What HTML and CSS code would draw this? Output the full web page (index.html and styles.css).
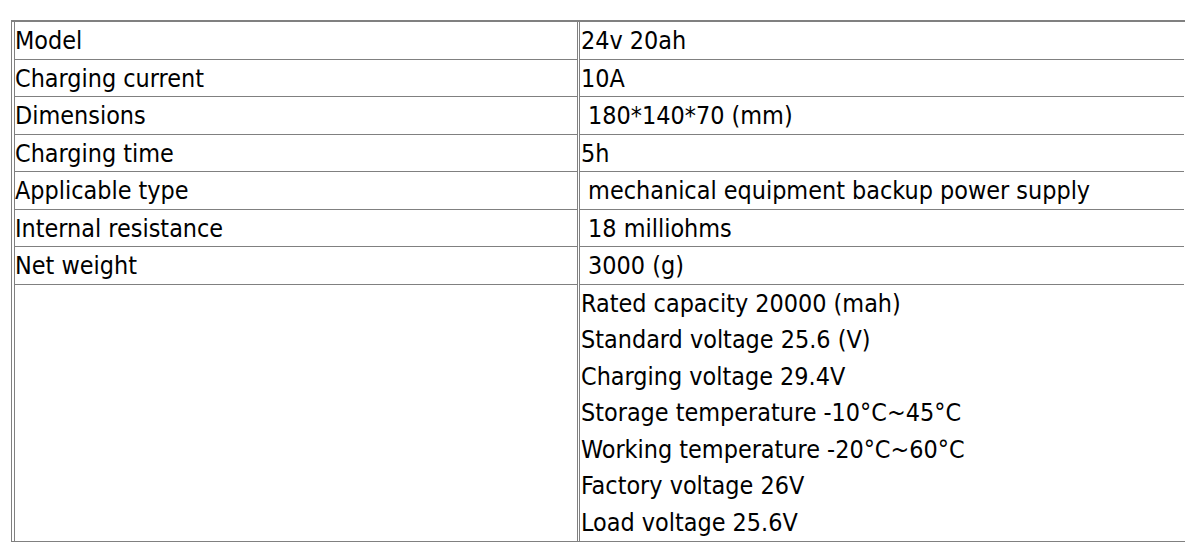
FILE: index.html
```html
<!DOCTYPE html>
<html lang="en">
<head>
<meta charset="utf-8">
<title>Specifications</title>
<link rel="stylesheet" href="styles.css">
</head>
<body>
<table class="spec">
  <tbody>
    <tr><td class="k">Model</td><td class="v">24v 20ah</td></tr>
    <tr><td class="k">Charging current</td><td class="v">10A</td></tr>
    <tr><td class="k">Dimensions</td><td class="v">&nbsp;180*140*70 (mm)</td></tr>
    <tr><td class="k">Charging time</td><td class="v">5h</td></tr>
    <tr><td class="k">Applicable type</td><td class="v">&nbsp;mechanical equipment backup power supply</td></tr>
    <tr><td class="k">Internal resistance</td><td class="v">&nbsp;18 milliohms</td></tr>
    <tr><td class="k">Net weight</td><td class="v">&nbsp;3000 (g)</td></tr>
    <tr class="last">
      <td class="k"></td>
      <td class="v">
        <div class="line">Rated capacity 20000 (mah)</div>
        <div class="line">Standard voltage 25.6 (V)</div>
        <div class="line">Charging voltage 29.4V</div>
        <div class="line">Storage temperature -10°C~45°C</div>
        <div class="line">Working temperature -20°C~60°C</div>
        <div class="line">Factory voltage 26V</div>
        <div class="line">Load voltage 25.6V</div>
      </td>
    </tr>
  </tbody>
</table>
</body>
</html>
```
FILE: styles.css
```css
html, body {
  background: #ffffff;
}
body {
  margin: 20px 0 0 11px;
  overflow: hidden;
  font-family: "DejaVu Sans Condensed", "DejaVu Sans", sans-serif;
  font-stretch: condensed;
  font-size: 24.9px;
  line-height: 35.57px;
  color: #000000;
}
.spec {
  width: 1174px;
  border-collapse: separate;
  border-spacing: 1px 0;
  padding: 0 0 0 1px;
  border-top: 2px solid #808080;
  border-left: 1px solid #808080;
  border-bottom: 1px solid #808080;
  table-layout: fixed;
}
.spec td {
  padding: 1px 0 0 0;
  border-bottom: 1px solid #808080;
  vertical-align: middle;
  white-space: nowrap;
}
.spec tr.last td {
  border-bottom: none;
}
.spec td.k {
  width: 562px;
  border-left: 1px solid #808080;
  border-right: 1px solid #808080;
}
.spec td.v {
  border-left: 1px solid #808080;
  padding-left: 1px;
}
.line {
  display: block;
  line-height: 36.43px;
}
```
